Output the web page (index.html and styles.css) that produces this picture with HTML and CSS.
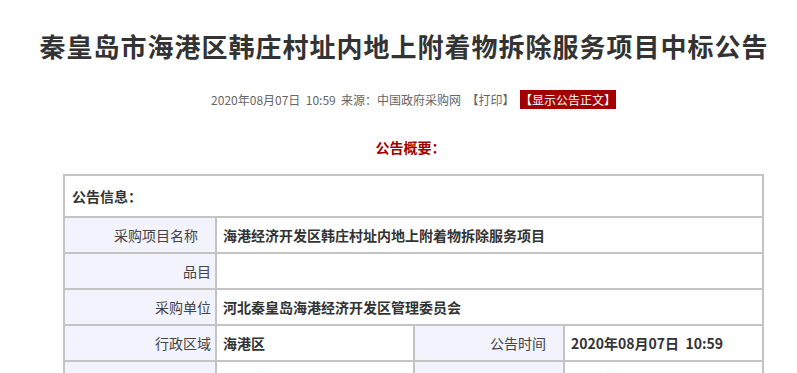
FILE: index.html
```html
<!DOCTYPE html>
<html lang="zh-CN">
<head>
    <meta charset="UTF-8">
    <meta name="viewport" content="width=device-width, initial-scale=1.0">
    <title>秦皇岛市海港区韩庄村址内地上附着物拆除服务项目中标公告</title>
    <link rel="stylesheet" href="styles.css">
</head>
<body>
    <div class="notice">
        <h2 class="title">秦皇岛市海港区韩庄村址内地上附着物拆除服务项目中标公告</h2>
        <p class="meta">
            2020年08月07日&nbsp; 10:59&nbsp; 来源：<span class="source">中国政府采购网</span>&nbsp;
            <span class="print">【打印】</span>&nbsp;
            <span class="show-text">【显示公告正文】</span>
        </p>

        <p class="summary-title">公告概要：</p>

        <table class="info-table">
            <colgroup>
                <col class="col-label">
                <col class="col-value">
                <col class="col-label2">
                <col class="col-value2">
            </colgroup>
            <tr>
                <td class="head" colspan="4">公告信息：</td>
            </tr>
            <tr>
                <td class="label pad">采购项目名称</td>
                <td class="value" colspan="3">海港经济开发区韩庄村址内地上附着物拆除服务项目</td>
            </tr>
            <tr>
                <td class="label">品目</td>
                <td class="value" colspan="3"></td>
            </tr>
            <tr>
                <td class="label">采购单位</td>
                <td class="value" colspan="3">河北秦皇岛海港经济开发区管理委员会</td>
            </tr>
            <tr>
                <td class="label">行政区域</td>
                <td class="value">海港区</td>
                <td class="label pad">公告时间</td>
                <td class="value">2020年08月07日&nbsp; 10:59</td>
            </tr>
            <tr>
                <td class="label">本项目招标公告日期</td>
                <td class="value">2020年07月16日</td>
                <td class="label pad">中标日期</td>
                <td class="value">2020年08月06日</td>
            </tr>
        </table>
    </div>
</body>
</html>
```

FILE: styles.css
```css
/* CSS */
body {
    margin: 0;
    padding: 0;
    background: #fff;
    font-family: "Noto Sans CJK SC", "Noto Sans", sans-serif;
    color: #333;
}

.notice {
    width: 797px;
}

.title {
    margin: 0;
    padding: 26px 0 0 11px;
    font-size: 26px;
    line-height: 40px;
    font-weight: bold;
    letter-spacing: 1px;
    text-align: center;
    color: #333;
    white-space: nowrap;
}

.meta {
    margin: 24px 0 0 30px;
    font-size: 12px;
    line-height: 20px;
    color: #666;
    text-align: center;
}

.show-text {
    background-color: #a00000;
    color: #fff;
    padding: 1px 0;
}

.summary-title {
    margin: 27px 0 0 24px;
    font-size: 14px;
    line-height: 20px;
    font-weight: bold;
    color: #a00000;
    text-align: center;
}

.info-table {
    margin: 17px 0 0 63px;
    border-collapse: collapse;
    table-layout: fixed;
    width: 701px;
    font-size: 14px;
}

.col-label {
    width: 152px;
}

.col-value {
    width: 198px;
}

.col-label2 {
    width: 150px;
}

.col-value2 {
    width: 199px;
}

.info-table td {
    border: 2px solid #c4c4c4;
    height: 34px;
    padding: 0;
    line-height: 20px;
    white-space: nowrap;
    overflow: hidden;
}

.info-table td.head {
    height: 40px;
    padding-left: 7px;
    font-weight: bold;
    color: #333;
}

.info-table td.label {
    background-color: #f2f3fc;
    text-align: right;
    padding-right: 4px;
    color: #444;
}

.info-table td.label.pad {
    padding-right: 17px;
}

.info-table td.value {
    padding-left: 6px;
    font-weight: bold;
    color: #333;
}
```
